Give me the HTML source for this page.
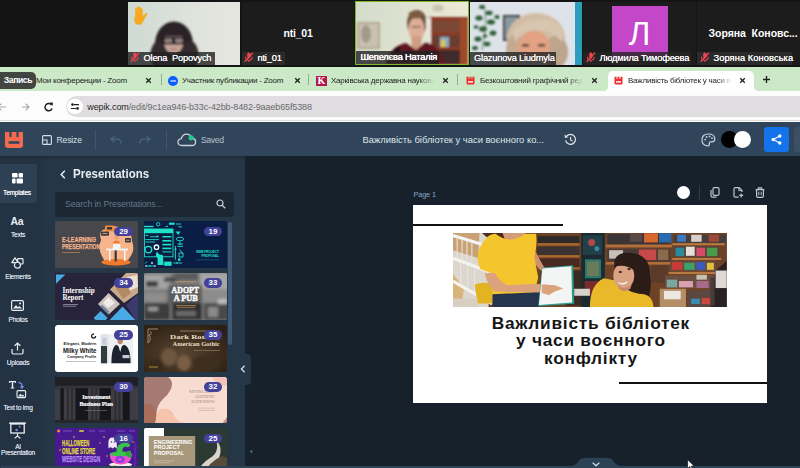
<!DOCTYPE html>
<html><head><meta charset="utf-8">
<style>
*{margin:0;padding:0;box-sizing:border-box}
html,body{width:800px;height:468px;overflow:hidden;background:#16212b;font-family:"Liberation Sans",sans-serif}
.a{position:absolute}
#zoom{left:0;top:0;width:800px;height:67px;background:#141414}
.tile{position:absolute;top:1.5px;height:63.5px;background:#1a1a1a;overflow:hidden}
.nm{position:absolute;bottom:0;left:0;height:13.5px;background:rgba(34,34,34,.8);color:#fff;font-size:9.3px;line-height:13.5px;padding:0 3px 0 2px;white-space:nowrap;letter-spacing:-.2px;text-shadow:0 0 .6px #fff}
.mic{display:inline-block;width:9.5px;height:10.5px;vertical-align:-2px;margin-right:4px}
#tabs{left:0;top:66px;width:800px;height:25px;background:#cbe9c6;border-top:1px solid #141414}
.tab{position:absolute;top:0;height:25px;font-size:8px;letter-spacing:-.22px;line-height:27px;height:24px;color:#222;white-space:nowrap;overflow:hidden}
.x{position:absolute;top:0;font-size:9px;line-height:25px;color:#222;font-weight:bold}
#addr{left:0;top:91px;width:800px;height:31px;background:#fdfcfd}
#pill{left:66px;top:96px;width:760px;height:21px;border-radius:11px;background:#dfdde0}
#wtop{left:0;top:121.5px;width:800px;height:34.5px;background:#30455a}
#rail{left:0;top:156px;width:44.4px;height:312px;background:#233343}
#panel{left:44px;top:156px;width:199.5px;height:312px;background:#253647}
#canvas{left:243.5px;top:156px;width:556.5px;height:312px;background:#16212b}
.rl{position:absolute;left:-2px;width:40px;text-align:center;color:#d3dbe3;font-size:6.6px;line-height:7px;letter-spacing:-.25px;white-space:nowrap;text-shadow:0 0 .4px #d3dbe3}
.th{position:absolute;width:83.2px;height:46.9px;overflow:hidden;border-radius:1.5px}
.bd{position:absolute;left:59.8px;top:5.5px;width:18.4px;height:9.5px;border-radius:4.8px;background:#43419a;color:#fff;font-size:7.9px;font-weight:bold;line-height:9.9px;text-align:center;letter-spacing:-.1px}
</style></head><body>
<div id="zoom" class="a">
<!-- tile 1 -->
<div class="tile" style="left:128px;width:112px;background:linear-gradient(90deg,#cfdad2,#dfe3dc 60%,#e6e6e0)">
<svg class="a" style="left:0;top:0" width="112" height="63" viewBox="0 0 112 63">
<defs><filter id="b1"><feGaussianBlur stdDeviation="1.1"/></filter></defs>
<g filter="url(#b1)">
<ellipse cx="46" cy="42" rx="19" ry="22.5" fill="#2a2125"/>
<ellipse cx="31" cy="53" rx="8.5" ry="14" fill="#352a2e"/>
<ellipse cx="62" cy="53" rx="8.5" ry="14" fill="#352a2e"/>
<ellipse cx="45.7" cy="40" rx="9.8" ry="11.5" fill="#c6a69a"/>
<path d="M36 31 Q46 24 56 31 L56 34 H36 Z" fill="#2a2125"/>
<rect x="34.4" y="34.6" width="22.4" height="8" rx="2.4" fill="#231d20"/>
<rect x="36.6" y="36.4" width="7.6" height="4.6" rx="1.4" fill="#8d7f7c"/>
<rect x="47.2" y="36.4" width="7.6" height="4.6" rx="1.4" fill="#8d7f7c"/>
<rect x="42" y="46.4" width="7" height="1.6" rx=".8" fill="#a8726c"/>
<rect x="30" y="56" width="36" height="8" fill="#4a4446"/>
</g>
<g transform="translate(3.6,3.8) scale(1.12)"><path d="M3.2 8.5 L3.2 3 Q3.2 2 4 2 Q4.8 2 4.8 3 L4.8 1.3 Q4.8 .3 5.7 .3 Q6.6 .3 6.6 1.3 L6.6 1.8 Q6.6 .9 7.4 .9 Q8.3 .9 8.3 1.9 L8.3 3 Q8.3 2.2 9.1 2.2 Q9.9 2.2 9.9 3.2 L9.9 9 L12.6 6.6 Q13.6 6 14 7 L10.5 13.5 Q9 17 6.3 17 Q2.4 17 2.4 12 Z" fill="#f6a821"/></g>
</svg>
<div class="nm" style="width:87px"><svg class="mic" viewBox="0 0 8 9"><use href="#mic"/></svg>Olena&nbsp; Popovych</div>
</div>
<!-- tile 2 -->
<div class="tile" style="left:242px;width:112px;background:#1c1c1c">
<div class="a" style="left:0;width:112px;top:24.6px;text-align:center;color:#fff;font-weight:bold;font-size:10.5px;line-height:14px;letter-spacing:-.2px">nti_01</div>
<div class="nm" style="background:#2b2b2b"><svg class="mic" viewBox="0 0 8 9"><use href="#mic"/></svg>nti_01</div>
</div>
<!-- tile 3 -->
<div class="tile" style="left:355px;top:1px;height:64px;width:114px;background:#7eb82a">
<svg class="a" style="left:1px;top:1px" width="112" height="62" viewBox="0 0 112 62">
<defs><filter id="b3"><feGaussianBlur stdDeviation="0.9"/></filter><linearGradient id="w3" x1="0" x2="1"><stop offset="0" stop-color="#d3dccb"/><stop offset="1" stop-color="#ece8d6"/></linearGradient></defs>
<rect width="112" height="62" fill="url(#w3)"/>
<g filter="url(#b3)">
<rect x="1" y="20" width="23" height="27" fill="#b9a98f"/>
<rect x="3" y="22" width="19" height="23" fill="#c9c2b0"/>
<ellipse cx="10" cy="32" rx="5" ry="9" fill="#a59a88"/>
<rect x="72" y="15" width="40" height="48" fill="#8c3a27"/>
<rect x="76" y="19" width="28" height="11" fill="#7a4a34"/>
<rect x="76" y="33" width="28" height="12" fill="#6a3e2e"/>
<rect x="76" y="48" width="28" height="14" fill="#3f2a2a"/>
<rect x="104" y="17" width="8" height="46" fill="#a04a2c"/>
<rect x="84" y="35" width="9" height="10" fill="#8aa8c0"/>
<rect x="85" y="38" width="4" height="7" fill="#e0c838"/>
<ellipse cx="82" cy="6" rx="6" ry="3.5" fill="#c9c4b4"/>
<ellipse cx="61" cy="21" rx="10" ry="13" fill="#6e523c"/>
<rect x="70" y="16" width="5" height="26" fill="#e8e4dc"/>
<ellipse cx="60.5" cy="27" rx="8" ry="12" fill="#dcae96"/>
<ellipse cx="60" cy="12.5" rx="7.5" ry="4" fill="#7a5a40"/><rect x="56" y="24" width="9" height="1.6" fill="#8a6654"/><rect x="58" y="35" width="5" height="1.4" fill="#b8705e"/>
<rect x="55.5" y="34" width="10" height="16" fill="#cf9c84"/><path d="M30 62 Q34 44 50 41 L60 48 L70 40 Q86 45 88 62 Z" fill="#5e1820"/>
<path d="M38 50 l6 -4 M46 56 l8 -6 M70 50 l8 6 M60 58 l10 -4" stroke="#1c1014" stroke-width="4"/>
</g>
</svg>
<div class="nm" style="left:1px;bottom:1px;width:83px;padding-left:4.5px;text-shadow:0 0 .8px #fff,0 0 .4px #fff">Шепелєва Наталія</div>
</div>
<!-- tile 4 -->
<div class="tile" style="left:470px;width:112px;background:#dde3e8">
<svg class="a" style="left:0;top:0" width="112" height="63" viewBox="0 0 112 63">
<defs><filter id="b4"><feGaussianBlur stdDeviation="1"/></filter></defs>
<rect x="105" y="0" width="7" height="63" fill="#2d9dbd"/>
<g filter="url(#b4)">
<rect x="33" y="13" width="17" height="26" fill="#3c434c"/>
<rect x="35" y="15" width="13" height="22" fill="#8a96a0"/>
<g fill="#2f5e38"><ellipse cx="12" cy="5" rx="3" ry="2"/><ellipse cx="19" cy="11" rx="3.6" ry="2.2"/><ellipse cx="9" cy="16" rx="3.6" ry="2.6"/><ellipse cx="21" cy="20" rx="4" ry="2.6"/><ellipse cx="13" cy="27" rx="4" ry="2.8"/><ellipse cx="23" cy="31" rx="3.4" ry="2.6"/><ellipse cx="8" cy="37" rx="3.6" ry="2.6"/><ellipse cx="17" cy="42" rx="3.4" ry="2.2"/><ellipse cx="27" cy="15" rx="2.6" ry="2"/><ellipse cx="5" cy="46" rx="3" ry="2"/><ellipse cx="15" cy="34" rx="2.4" ry="1.8"/><ellipse cx="6" cy="25" rx="2.4" ry="1.8"/><path d="M14 3 Q18 20 12 48" fill="none" stroke="#4a6a44" stroke-width=".8"/></g>
<ellipse cx="66" cy="36" rx="29" ry="25" fill="#d2bca4"/>
<ellipse cx="86" cy="50" rx="12" ry="16" fill="#bda48c"/>
<ellipse cx="45" cy="48" rx="9" ry="16" fill="#c4aa92"/>
<ellipse cx="64" cy="44" rx="16" ry="15" fill="#e2a283"/>
<path d="M42 30 Q55 14 80 18 Q96 24 92 40 Q80 26 62 28 Q50 30 46 40 Z" fill="#d8c6b0"/>
<rect x="52" y="42" width="7" height="2.5" fill="#4a3a34"/><rect x="68" y="42" width="7" height="2.5" fill="#4a3a34"/>
</g>
</svg>
<div class="nm" style="width:86px;padding-left:4px">Glazunova Liudmyla</div>
</div>
<!-- tile 5 -->
<div class="tile" style="left:583px;width:113px;background:#1c1c1c">
<div class="a" style="left:28.5px;top:4px;width:56px;height:52px;background:#c446c9;color:#fff;font-size:33px;line-height:56px;text-align:center">Л</div>
<div class="nm" style="width:108px;background:rgba(38,38,38,.82)"><svg class="mic" viewBox="0 0 8 9" style="margin-left:1px"><use href="#mic"/></svg>Людмила Тимофеева</div>
</div>
<!-- tile 6 -->
<div class="tile" style="left:697px;width:103px;background:#1c1c1c">
<div class="a" style="left:11.5px;top:24.8px;color:#fff;font-weight:bold;font-size:10.5px;line-height:14px;white-space:nowrap;letter-spacing:-.04px">Зоряна&nbsp; Коновс...</div>
<div class="nm" style="background:#2b2b2b;width:95px;letter-spacing:.08px"><svg class="mic" viewBox="0 0 8 9" style="margin-left:1px"><use href="#mic"/></svg>Зоряна Коновська</div>
</div>
</div>
<svg width="0" height="0" style="position:absolute"><defs><g id="mic"><rect x="2.7" y=".5" width="2.8" height="5" rx="1.4" fill="#ee4450"/><path d="M1.2 4 Q1.2 7 4.1 7 Q7 7 7 4 M4.1 7 V8.6" stroke="#ee4450" stroke-width=".9" fill="none"/><path d="M.6 8.4 L7.6 .6" stroke="#ee4450" stroke-width="1.1"/></g></defs></svg>

<div id="tabs" class="a">
<div class="a" style="left:608px;top:3.5px;width:146px;height:21px;background:#fff;border-radius:5px 5px 0 0"></div>
<div class="a" style="left:603px;top:19px;width:5px;height:5px;background:radial-gradient(circle at 0 0,transparent 5px,#fff 5.5px)"></div>
<div class="a" style="left:754px;top:19px;width:5px;height:5px;background:radial-gradient(circle at 100% 0,transparent 5px,#fff 5.5px)"></div>
<div class="tab" style="left:36px;width:96px">Мои конференции - Zoom</div>
<svg class="a" style="left:145px;top:9.5px" width="7" height="7" viewBox="0 0 7 7"><path d="M1.2 1.2 L5.8 5.8 M5.8 1.2 L1.2 5.8" stroke="#1f1f1f" stroke-width="1.25"/></svg>
<div class="a" style="left:161px;top:7px;width:1px;height:11px;background:#8fae8c"></div>
<div class="a" style="left:168px;top:8.5px;width:10px;height:10px;border-radius:5px;background:#0b5cff;color:#fff;font-size:4px;line-height:10px;text-align:center;font-weight:bold">zm</div>
<div class="tab" style="left:182px;width:108px">Участник публикации - Zoom</div>
<svg class="a" style="left:294px;top:9.5px" width="7" height="7" viewBox="0 0 7 7"><path d="M1.2 1.2 L5.8 5.8 M5.8 1.2 L1.2 5.8" stroke="#1f1f1f" stroke-width="1.25"/></svg>
<div class="a" style="left:308px;top:7px;width:1px;height:11px;background:#8fae8c"></div>
<div class="a" style="left:316px;top:8.5px;width:11px;height:10.5px;background:#b2184f;color:#fff;font-family:'Liberation Serif',serif;font-weight:bold;font-size:10px;line-height:10.5px;text-align:center">K</div>
<div class="tab" style="left:331px;width:103px;-webkit-mask-image:linear-gradient(90deg,#000 85%,transparent)">Харківська державна наукова</div>
<svg class="a" style="left:442px;top:9.5px" width="7" height="7" viewBox="0 0 7 7"><path d="M1.2 1.2 L5.8 5.8 M5.8 1.2 L1.2 5.8" stroke="#1f1f1f" stroke-width="1.25"/></svg>
<div class="a" style="left:457px;top:7px;width:1px;height:11px;background:#8fae8c"></div>
<svg class="a" style="left:466px;top:9px" width="9" height="9" viewBox="0 0 9 9"><use href="#wfav"/></svg>
<div class="tab" style="left:480px;width:103px;-webkit-mask-image:linear-gradient(90deg,#000 85%,transparent)">Безкоштовний графічний реда</div>
<svg class="a" style="left:591px;top:9.5px" width="7" height="7" viewBox="0 0 7 7"><path d="M1.2 1.2 L5.8 5.8 M5.8 1.2 L1.2 5.8" stroke="#1f1f1f" stroke-width="1.25"/></svg>
<svg class="a" style="left:614px;top:9px" width="9" height="9" viewBox="0 0 9 9"><use href="#wfav"/></svg>
<div class="tab" style="left:628px;width:104px;-webkit-mask-image:linear-gradient(90deg,#000 85%,transparent)">Важливість бібліотек у часи во</div>
<svg class="a" style="left:739px;top:9.5px" width="7" height="7" viewBox="0 0 7 7"><path d="M1.2 1.2 L5.8 5.8 M5.8 1.2 L1.2 5.8" stroke="#1f1f1f" stroke-width="1.25"/></svg>
<svg class="a" style="left:761.5px;top:8px" width="9" height="9" viewBox="0 0 9 9"><path d="M4.5 1 V8 M1 4.5 H8" stroke="#1f1f1f" stroke-width="1.35"/></svg>
<div class="a" style="left:21px;top:8px;width:10px;height:10px;border-radius:5px;background:#0b5cff"></div>
<div class="a" style="left:0;top:5.4px;width:36px;height:16.6px;background:rgba(58,58,56,.94);border-radius:0 5px 5px 0;color:#fff;font-weight:bold;font-size:8.7px;letter-spacing:-.45px;line-height:16.6px;padding-left:3.8px">Запись</div>
</div>
<svg width="0" height="0" style="position:absolute"><defs><g id="wfav"><path d="M.5 .8 H2.6 V3 H3.5 V.8 H5.5 V3 H6.4 V.8 H8.5 V7.2 Q8.5 8.5 7.2 8.5 H1.8 Q.5 8.5 .5 7.2 Z" fill="#e8312f"/><rect x="2" y="5.2" width="5" height="1.4" fill="#fff"/></g></defs></svg>

<div id="addr" class="a">
<div class="a" style="left:0;top:29px;width:800px;height:1px;background:#dcdcdc"></div>
<svg class="a" style="left:0;top:10px" width="60" height="12" viewBox="0 0 60 12">
<path d="M-2 6 H6 M1.4 2.6 L-2 6 L1.4 9.4" stroke="#a6a6a6" stroke-width="1.1" fill="none"/>
<path d="M22 6 H29 M25.6 2.6 L29 6 L25.6 9.4" stroke="#a6a6a6" stroke-width="1.1" fill="none"/>
<path d="M51.6 4.2 A3.6 3.6 0 1 0 52 7.4" stroke="#1f1f1f" stroke-width="1.5" fill="none"/><path d="M49.6 1.6 H52.8 V4.8 Z" fill="#1f1f1f"/>
</svg>
</div>
<div id="pill" class="a">
<div class="a" style="left:1.2px;top:3px;width:15.4px;height:15.4px;border-radius:8px;background:#fff"></div>
<svg class="a" style="left:5px;top:7.4px" width="8" height="7" viewBox="0 0 8 7"><path d="M3 1.6 H8 M0 5.4 H5" stroke="#1f1f1f" stroke-width="1.05"/><circle cx="1.5" cy="1.6" r="1.3" fill="#1f1f1f"/><circle cx="6.5" cy="5.4" r="1.3" fill="#1f1f1f"/></svg>
<div class="a" style="left:21.3px;top:0;font-size:9px;line-height:22px;color:#1f1f1f;white-space:nowrap;letter-spacing:-.12px">wepik.com<span style="color:#6a6a6a">/edit/9c1ea946-b33c-42bb-8482-9aaeb65f5388</span></div>
</div>
<div id="wtop" class="a">
<svg class="a" style="left:4.5px;top:10px" width="18" height="16" viewBox="0 0 18 16"><path d="M0 0 H4.4 V5 H6.6 V0 H11.4 V5 H13.6 V0 H18 V13 Q18 16 15 16 H3 Q0 16 0 13 Z" fill="#f36a4f"/><rect x="3.6" y="9.2" width="10.8" height="2.6" fill="#30455a"/></svg>
<svg class="a" style="left:42px;top:13.5px" width="10" height="10" viewBox="0 0 10 10"><rect x=".6" y=".6" width="8.8" height="8.8" rx="1" fill="none" stroke="#d5dde5" stroke-width="1.1"/><path d="M.6 5 H5 V9.4" fill="none" stroke="#d5dde5" stroke-width="1.1"/></svg>
<div class="a" style="left:56.5px;top:0;font-size:8.6px;line-height:36px;color:#d9e1e8;letter-spacing:-.17px">Resize</div>
<div class="a" style="left:95px;top:8px;width:1px;height:20px;background:#40556a"></div>
<svg class="a" style="left:110px;top:13px" width="12" height="10" viewBox="0 0 12 10"><path d="M4.5 1 L1 4.2 L4.5 7.4 M1 4.2 H7.5 Q11 4.2 11 8.5" fill="none" stroke="#4d647a" stroke-width="1.2"/></svg>
<svg class="a" style="left:139px;top:13px" width="12" height="10" viewBox="0 0 12 10"><path d="M7.5 1 L11 4.2 L7.5 7.4 M11 4.2 H4.5 Q1 4.2 1 8.5" fill="none" stroke="#4d647a" stroke-width="1.2"/></svg>
<div class="a" style="left:166px;top:8px;width:1px;height:20px;background:#40556a"></div>
<svg class="a" style="left:177px;top:11px" width="20" height="14" viewBox="0 0 20 14"><path d="M5 12.5 Q1 12.5 1 9 Q1 6 4.4 5.6 Q5.4 1.2 9.6 1.2 Q13.4 1.2 14.4 5 Q18.6 5.2 18.6 9 Q18.6 12.5 14.8 12.5 Z" fill="none" stroke="#c9d3dc" stroke-width="1.3"/><circle cx="14.2" cy="4.8" r="2.6" fill="#1fc98e"/></svg>
<div class="a" style="left:201px;top:0;font-size:8.6px;line-height:36px;color:#b6c2cd;letter-spacing:-.36px">Saved</div>
<div class="a" style="left:362.5px;top:0;font-size:9.4px;line-height:36.5px;color:#dfe6ec;white-space:nowrap;letter-spacing:0">Важливість бібліотек у часи воєнного ко...</div>
<svg class="a" style="left:563.5px;top:11px" width="13" height="13" viewBox="0 0 13 13"><path d="M2.6 3.2 A5 5 0 1 1 1.6 7.4" fill="none" stroke="#dfe6ec" stroke-width="1.2"/><path d="M.6 1.6 L.9 5 L4.2 4.2 Z" fill="#dfe6ec"/><path d="M6.6 4 V6.9 L8.6 8" fill="none" stroke="#dfe6ec" stroke-width="1.1"/></svg>
<svg class="a" style="left:700.5px;top:11.5px" width="15" height="14" viewBox="0 0 15 14"><path d="M7.4 1 Q13.8 1 13.8 6 Q13.8 8.8 10.8 8.8 H9.6 Q8.2 8.8 8.4 10.2 Q8.8 12.8 6.6 12.8 Q1 12.4 1 7 Q1 1 7.4 1 Z" fill="none" stroke="#c9d3dc" stroke-width="1.2"/><circle cx="4.2" cy="6.6" r=".9" fill="#c9d3dc"/><circle cx="5.6" cy="4" r=".9" fill="#c9d3dc"/><circle cx="8.6" cy="3.4" r=".9" fill="#c9d3dc"/><circle cx="11" cy="5.2" r=".9" fill="#c9d3dc"/></svg>
<div class="a" style="left:721px;top:9.5px;width:17px;height:17px;border-radius:9px;background:#000"></div>
<div class="a" style="left:733.7px;top:9.2px;width:17.6px;height:17.6px;border-radius:9px;background:#fff"></div>
<div class="a" style="left:763.5px;top:5px;width:25px;height:25px;border-radius:3px;background:#1273ea"></div>
<svg class="a" style="left:770.5px;top:12px" width="11" height="11" viewBox="0 0 11 11"><path d="M8.6 2 L2.4 5.5 L8.6 9" fill="none" stroke="#fff" stroke-width="1.1"/><circle cx="8.8" cy="2" r="1.7" fill="#fff"/><circle cx="2.2" cy="5.5" r="1.7" fill="#fff"/><circle cx="8.8" cy="9" r="1.7" fill="#fff"/></svg>
<div class="a" style="left:794px;top:5px;width:10px;height:25px;border-radius:3px;background:#3b5065"></div>
</div>
<div class="a" style="left:0;top:156px;width:800px;height:4px;background:linear-gradient(#17202a88,#17202a00);z-index:5"></div>
<div id="rail" class="a">
<div class="a" style="left:0;top:8px;width:37px;height:39px;background:#2d4054;border-radius:0 3px 3px 0"></div>
<svg class="a" style="left:12px;top:17px" width="11" height="11" viewBox="0 0 11 11"><rect x="0" y="0" width="5.6" height="4.6" rx="1" fill="#fff"/><rect x="6.6" y="0" width="4.4" height="4.6" rx="1" fill="#fff"/><rect x="0" y="5.6" width="3.6" height="4.8" rx="1" fill="#fff"/><rect x="4.6" y="5.6" width="6.4" height="4.8" rx="1" fill="#fff"/></svg>
<div class="rl" style="top:32.8px;left:-3px;color:#fff">Templates</div>
<div class="a" style="left:10.5px;top:59px;width:14px;font-size:10.5px;font-weight:bold;color:#e8edf2;line-height:12px;letter-spacing:-.3px">Aa</div>
<div class="rl" style="top:74.8px">Texts</div>
<svg class="a" style="left:11px;top:100.5px" width="13" height="12" viewBox="0 0 13 12"><path d="M4 .8 L7.2 5.6 H.8 Z" fill="none" stroke="#e8edf2" stroke-width="1.2" stroke-linejoin="round"/><rect x="6.6" y="1.6" width="5.4" height="5.4" rx=".8" fill="none" stroke="#e8edf2" stroke-width="1.2"/><circle cx="6.4" cy="8.2" r="3" fill="#233343" stroke="#e8edf2" stroke-width="1.2"/></svg>
<div class="rl" style="top:117px">Elements</div>
<svg class="a" style="left:11px;top:144px" width="13" height="11" viewBox="0 0 13 11"><rect x=".6" y=".6" width="11.8" height="9.8" rx="1.2" fill="none" stroke="#e8edf2" stroke-width="1.2"/><path d="M2 8.6 L5 5 L7 7.2 L8.4 6 L11 8.6 Z" fill="#e8edf2"/><circle cx="9" cy="3.4" r="1" fill="#e8edf2"/></svg>
<div class="rl" style="top:159.8px">Photos</div>
<svg class="a" style="left:11px;top:185.5px" width="13" height="13" viewBox="0 0 13 13"><path d="M1 7 V10.6 Q1 12 2.4 12 H10.6 Q12 12 12 10.6 V7" fill="none" stroke="#e8edf2" stroke-width="1.2"/><path d="M6.5 8.6 V1.2 M3.6 3.8 L6.5 1 L9.4 3.8" fill="none" stroke="#e8edf2" stroke-width="1.2"/></svg>
<div class="rl" style="top:202.8px">Uploads</div>
<svg class="a" style="left:8px;top:224px" width="19" height="19" viewBox="0 0 19 19"><path d="M1 1 H8 V3 H7.2 V2.2 H5.2 V7.4 H6.2 V8.4 H2.8 V7.4 H3.8 V2.2 H1.8 V3 H1 Z" fill="#e8edf2"/><path d="M10.4 2.6 Q14 2.6 14 6 V7.6 M12.4 6.4 L14 8 L15.6 6.4" fill="none" stroke="#6d8cf0" stroke-width="1.3"/><rect x="9" y="10.6" width="8.6" height="7" rx="1" fill="none" stroke="#e8edf2" stroke-width="1.1"/><path d="M10 16.6 L12.4 13.8 L14 15.4 L15 14.6 L16.8 16.6 Z" fill="#e8edf2"/></svg>
<div class="rl" style="top:247.6px">Text to img</div>
<svg class="a" style="left:8.5px;top:266px" width="17" height="17" viewBox="0 0 17 17"><rect x=".2" y=".4" width="16.6" height="1.6" fill="#e8edf2"/><rect x="1.8" y="2" width="13.4" height="9" fill="#1a2633" stroke="#e8edf2" stroke-width="1.3"/><circle cx="10.6" cy="4.8" r="1" fill="#6d8cf0"/><circle cx="7.6" cy="8" r="1.3" fill="#6d8cf0"/><path d="M8.5 11.6 V14.4 M5.6 16.4 L8.5 14 L11.4 16.4" fill="none" stroke="#e8edf2" stroke-width="1.2"/></svg>
<div class="rl" style="top:286.6px">AI</div>
<div class="rl" style="top:292.5px">Presentation</div>
</div>
<div id="panel" class="a">
<svg class="a" style="left:16px;top:13.5px" width="6" height="9" viewBox="0 0 6 9"><path d="M4.8 .8 L1.2 4.5 L4.8 8.2" fill="none" stroke="#e8eef4" stroke-width="1.5"/></svg>
<div class="a" style="left:28.5px;top:9.3px;font-size:13px;font-weight:bold;line-height:18px;color:#e8eef4;transform:scaleX(.885);transform-origin:0 0;white-space:nowrap">Presentations</div>
<div class="a" style="left:11px;top:35.5px;width:179px;height:25px;border-radius:3px;background:#1b2733"></div>
<div class="a" style="left:21px;top:35.5px;font-size:8.8px;line-height:25px;color:#66778a;letter-spacing:-.12px">Search in Presentations...</div>
<svg class="a" style="left:172px;top:43px" width="10" height="10" viewBox="0 0 10 10"><circle cx="4" cy="4" r="3" fill="none" stroke="#c9d3dc" stroke-width="1.2"/><path d="M6.2 6.2 L9.2 9.2" stroke="#c9d3dc" stroke-width="1.3"/></svg>
<div class="a" style="left:183.5px;top:66px;width:4.5px;height:123px;border-radius:2px;background:#3f5a74"></div>
<div class="th" style="left:10.6px;top:65.0px;"><svg class="a" style="left:0;top:0" width="83" height="47" viewBox="0 0 83 47"><rect width="83" height="47" fill="#48474b"/>
<path d="M46 19 Q43 9 51 8 Q57 3.5 65 6.5 Q77 8.5 77 20 Q80.5 30 75 36 Q73 42 61 42 Q50 44 47.5 36 Q42.5 28 46 19 Z" fill="#f6b48d"/>
<ellipse cx="61" cy="41.2" rx="14.6" ry="3.2" fill="#ee7a2c"/>
<rect x="50" y="4.5" width="9.5" height="6" rx="1.2" fill="#f08a3c"/><rect x="52" y="6" width="5" height="2.6" fill="#3a3a3e"/><rect x="46" y="10.4" width="8" height="4.4" rx="1" fill="#3a3a3e"/><rect x="47.4" y="12" width="5" height=".8" fill="#f6b48d"/><rect x="70" y="17" width="6" height="4.6" rx="1" fill="#3a3a3e"/><rect x="71.2" y="18.8" width="3.4" height=".8" fill="#f6b48d"/>
<circle cx="61.5" cy="16" r="2.8" fill="#f2a27a"/><path d="M57 26 Q57 19.5 61.5 19.5 Q66 19.5 66 26 Z" fill="#ee7a2c"/><rect x="57.6" y="22.6" width="8" height="5.4" fill="#f4f4f4"/><rect x="51" y="27.6" width="22" height="1.8" fill="#f4f4f4"/><rect x="54" y="29" width="1.5" height="11" fill="#f4f4f4"/><rect x="69" y="29" width="1.5" height="11" fill="#f4f4f4"/><rect x="59.6" y="29.4" width="2.2" height="11" fill="#3a3a3e"/>
<text x="7" y="20.6" font-family="Liberation Sans, sans-serif" font-weight="bold" font-size="7.6" fill="#f6b48d" stroke="#f6b48d" stroke-width=".25" textLength="34" lengthAdjust="spacingAndGlyphs">E-LEARNING</text>
<text x="7" y="27.6" font-family="Liberation Sans, sans-serif" font-weight="bold" font-size="7.6" fill="#f6b48d" stroke="#f6b48d" stroke-width=".25" textLength="38" lengthAdjust="spacingAndGlyphs">PRESENTATION</text>
<rect x="7" y="31" width="18" height=".9" fill="#a87858"/></svg><div class="bd">29</div></div>
<div class="th" style="left:99.9px;top:65.0px;"><svg class="a" style="left:0;top:0" width="83" height="47" viewBox="0 0 83 47"><rect width="83" height="47" fill="#0a1e45"/>
<g fill="none" stroke="#1fe3c6" stroke-width=".9">
<rect x="0" y="4.8" width="9.5" height="1.4" fill="#1fe3c6" stroke="none"/><circle cx="14.2" cy="3.2" r="1.7"/><rect x="25" y="1.6" width="5.6" height="2.2" fill="#1fe3c6" stroke="none"/><path d="M21.4 5.4 H24 M32 3 H37 M34.4 5.8 H38"/>
<rect x=".4" y="8" width="28.6" height="27.8"/><rect x="0" y="8" width="29" height="4.2" fill="#1fe3c6" stroke="none"/>
<path d="M1.6 14.4 H4.4 M6 15.8 H13 M1.4 18.6 H15 M1.4 21 H11"/><rect x="12.6" y="14.6" width="1.8" height="1.8" fill="#1fe3c6" stroke="none"/>
<g stroke="none" fill="#1fe3c6"><rect x="18.4" y="15" width="8.9" height="1.4"/><rect x="18.4" y="19" width="8.9" height="1.6"/><rect x="18.4" y="22.8" width="8.9" height="1.6"/><rect x="18.4" y="26.6" width="8.9" height="1.6"/><rect x="18.4" y="30.4" width="8.9" height="1"/></g>
<circle cx="4.4" cy="28.6" r="3.3" stroke-width="1.3"/><circle cx="12.5" cy="26.2" r="2.2" stroke="#eafffb" stroke-width="1.3"/>
<path d="M12.6 30.4 L15.4 33.4 L18.8 34 L19.6 44 H13.6 L13.6 37 L11.8 35.2 Z" fill="#1fe3c6" stroke="none"/>
<rect x="20.2" y="40.6" width="7.4" height="4.2" fill="#1fe3c6" stroke="none"/>
<path d="M31.6 10.4 H36.6 L34.1 14 Z" fill="#1fe3c6" stroke="none"/><ellipse cx="36" cy="18" rx="3.6" ry="1.8"/><path d="M36 20.4 V24 M33.6 23 H39 M33.6 25.4 H39"/>
<path d="M31.4 25 V38.6 M30.4 28 H32.6 M35.6 28.6 L38.6 32.6 M35 32 H39 V36 H35 Z"/><rect x="34" y="37.4" width="2.4" height="2.4" fill="#1fe3c6" stroke="none"/><path d="M29.4 42 H38 M33 41 V43"/>
<path d="M1 42.6 L3 40.6 M1.4 45 H11 M6 44 V46"/><rect x="7.2" y="41.2" width="1.6" height="1.6" fill="#eafffb" stroke="none"/><circle cx="2" cy="45" r=".8" fill="#eafffb" stroke="none"/><circle cx="11" cy="45" r=".8" fill="#eafffb" stroke="none"/>
</g>
<text x="74.8" y="32.3" text-anchor="end" font-family="Liberation Sans, sans-serif" font-weight="bold" font-size="3.3" fill="#1fe3c6" textLength="22.5" lengthAdjust="spacingAndGlyphs">WEB PROJECT</text>
<text x="74.8" y="35.9" text-anchor="end" font-family="Liberation Sans, sans-serif" font-weight="bold" font-size="3.3" fill="#1fe3c6" textLength="17.2" lengthAdjust="spacingAndGlyphs">PROPOSAL</text>
<rect x="52.3" y="38.6" width="22.5" height=".6" fill="#126a7e"/></svg><div class="bd">19</div></div>
<div class="th" style="left:10.6px;top:116.9px;"><svg class="a" style="left:0;top:0" width="83" height="47" viewBox="0 0 83 47"><rect width="83" height="47" fill="#27233b"/>
<path d="M1 1.4 H10.4 L1 10.8 Z" fill="#48a9e4"/>
<path d="M71 0 H83 V20 L69 30 L55 16.4 Z" fill="#c9a98c"/><path d="M72 4 L82 2 L83 14 L74 18 Z" fill="#ece0d4"/><path d="M60 14 L70 8 L76 20 L68 26 Z" fill="#b38a66"/>
<path d="M53.6 20 L65 31 L53.6 41.4 L43 31 Z" fill="#cfc4bc"/><path d="M53.6 24 L60 30 L53 35 L48 30 Z" fill="#f0ece8"/><path d="M47 32 L54 38 L53.6 41.4 L45 33 Z" fill="#6a86b0"/>
<path d="M71 32 L83 21 V47 H80.6 Z" fill="#3b3a6e"/>
<path d="M54.6 47 L67.6 33.6 L80.4 47 Z" fill="#48a9e4"/>
<path d="M38.6 45 L45.6 38 L52.6 45 L50.6 47 H40.6 Z" fill="#48a9e4"/>
<text x="7.4" y="19.6" font-family="Liberation Serif, serif" font-weight="bold" font-size="8.6" fill="#fff" textLength="32.4" lengthAdjust="spacingAndGlyphs">Internship</text>
<text x="7.4" y="26.8" font-family="Liberation Serif, serif" font-weight="bold" font-size="8.6" fill="#fff" textLength="21" lengthAdjust="spacingAndGlyphs">Report</text>
<rect x="8" y="31" width="15" height=".7" fill="#a8a8bc"/><rect x="8" y="32.8" width="13" height=".7" fill="#a8a8bc"/></svg><div class="bd">34</div></div>
<div class="th" style="left:99.9px;top:116.9px;"><svg class="a" style="left:0;top:0" width="83" height="47" viewBox="0 0 83 47"><defs><linearGradient id="g4" x1="0" y1="0" x2="1" y2="1"><stop offset="0" stop-color="#585858"/><stop offset=".5" stop-color="#8e8e8e"/><stop offset="1" stop-color="#5a5a5a"/></linearGradient><filter id="bl4"><feGaussianBlur stdDeviation="1.6"/></filter></defs><rect width="83" height="47" fill="url(#g4)"/>
<g filter="url(#bl4)"><rect x="-4" y="-4" width="91" height="55" fill="#7c7c7c"/><rect x="0" y="2" width="26" height="14" fill="#a4a4a4"/><rect x="2" y="8" width="12" height="6" fill="#3e3e3e"/><rect x="20" y="4" width="14" height="5" fill="#4a4a4a"/><rect x="0" y="20" width="22" height="9" fill="#8e8e8e"/><rect x="0" y="30" width="26" height="17" fill="#3c3c3c"/><rect x="4" y="34" width="10" height="4" fill="#9a9a9a"/>
<rect x="30" y="0" width="24" height="7" fill="#5a5a5a"/><rect x="28" y="30" width="30" height="17" fill="#2e2e2e"/><rect x="32" y="38" width="20" height="5" fill="#6a6a6a"/>
<rect x="56" y="0" width="30" height="16" fill="#a6a6a6"/><rect x="58" y="16" width="28" height="14" fill="#8c8c8c"/><rect x="60" y="30" width="26" height="17" fill="#4a4a4a"/><rect x="64" y="34" width="10" height="10" fill="#8a8a8a"/><rect x="74" y="26" width="9" height="5" fill="#bcbcbc"/>
<rect x="24" y="12" width="34" height="18" fill="#5c5c5c"/></g>
<text x="27.6" y="19.8" font-family="Liberation Serif, serif" font-weight="bold" font-size="8.8" fill="#fff" stroke="#fff" stroke-width=".45" textLength="27.4" lengthAdjust="spacingAndGlyphs">ADOPT</text>
<text x="29.8" y="27.8" font-family="Liberation Serif, serif" font-weight="bold" font-size="8.8" fill="#fff" stroke="#fff" stroke-width=".45" textLength="24" lengthAdjust="spacingAndGlyphs">A PUB</text>
<rect x="31" y="8.4" width="21" height=".8" fill="#c89a58"/><rect x="32" y="32.4" width="20" height=".8" fill="#c89a58"/><rect x="33" y="34.4" width="18" height=".7" fill="#b88a50"/></svg><div class="bd">33</div></div>
<div class="th" style="left:10.6px;top:168.7px;border-radius:2.5px;"><svg class="a" style="left:0;top:0" width="83" height="47" viewBox="0 0 83 47"><rect width="83" height="47" rx="2" fill="#fff"/>
<rect x="45.6" y="9.3" width="32.4" height="29" fill="#eef0f3"/><rect x="45.6" y="9.3" width="8" height="29" fill="#dfe3e8"/><rect x="46" y="21" width="6" height="17.3" fill="#2e3c3e"/><rect x="47.4" y="13" width="4" height="7" fill="#c4ccd4"/>
<path d="M56.4 38.3 Q56.4 21.6 61.4 19.8 L65.2 22.4 L69 19.8 Q75.6 21.6 75.6 38.3 Z" fill="#1d2231"/><path d="M63.4 20.6 L65.2 27 L67 20.6 Z" fill="#f6f6f6"/><ellipse cx="65.2" cy="15.6" rx="2.8" ry="3.6" fill="#b78868"/><path d="M62.3 14.2 Q65.2 10 68.1 14.2 Q65.2 12.6 62.3 14.2 Z" fill="#1a1a1a"/><rect x="67.5" y="30" width="7" height="3.2" fill="#c6cad0"/>
<circle cx="38.6" cy="11.1" r="2" fill="none" stroke="#1b1b1b" stroke-width="1.2" stroke-dasharray="9 3.6"/>
<text x="41.4" y="19.8" text-anchor="end" font-family="Liberation Sans, sans-serif" font-weight="bold" font-size="4.4" fill="#222" textLength="32.8" lengthAdjust="spacingAndGlyphs">Elegant, Modern</text>
<text x="41.4" y="27.6" text-anchor="end" font-family="Liberation Sans, sans-serif" font-weight="bold" font-size="7.4" fill="#111" textLength="33.5" lengthAdjust="spacingAndGlyphs">Milky White</text>
<text x="41.4" y="32.6" text-anchor="end" font-family="Liberation Sans, sans-serif" font-weight="bold" font-size="4.4" fill="#222" textLength="29.4" lengthAdjust="spacingAndGlyphs">Company Profile</text>
<rect x="11" y="36" width="30" height=".6" fill="#999"/></svg><div class="bd">25</div></div>
<div class="th" style="left:99.9px;top:168.7px;"><svg class="a" style="left:0;top:0" width="83" height="47" viewBox="0 0 83 47"><defs><radialGradient id="g6" cx=".45" cy=".6" r=".7"><stop offset="0" stop-color="#5a4430"/><stop offset="1" stop-color="#2c2014"/></radialGradient><filter id="bl6"><feGaussianBlur stdDeviation="1.4"/></filter></defs><rect width="83" height="47" fill="url(#g6)"/>
<g filter="url(#bl6)"><ellipse cx="25" cy="32" rx="8" ry="9" fill="#6e5640"/><ellipse cx="40" cy="38" rx="7" ry="8" fill="#7a5e44"/><ellipse cx="12" cy="40" rx="8" ry="6" fill="#3a2c1e"/><ellipse cx="62" cy="38" rx="14" ry="7" fill="#3c2e1e"/></g>
<path d="M4 4 H14 M4 4 V18 Q8 14 5 10 Q9 9 6 6" fill="none" stroke="#b9a27a" stroke-width=".8"/>
<rect x="36" y="5.6" width="26" height=".8" fill="#a8946e"/>
<text x="26" y="14.2" font-family="Liberation Serif, serif" font-weight="bold" font-size="6" fill="#eadfc4" textLength="50" lengthAdjust="spacingAndGlyphs">Dark Roman,</text>
<text x="28.6" y="20.6" font-family="Liberation Serif, serif" font-weight="bold" font-size="6" fill="#eadfc4" textLength="47" lengthAdjust="spacingAndGlyphs">American Gothic</text>
<rect x="50" y="25" width="26" height=".7" fill="#8c7a58"/><rect x="5" y="41.6" width="9" height=".8" fill="#c8a24a"/></svg><div class="bd">35</div></div>
<div class="th" style="left:10.6px;top:220.6px;"><svg class="a" style="left:0;top:0" width="83" height="47" viewBox="0 0 83 47"><rect width="83" height="47" fill="#1f1f23"/>
<rect x="0" y="0" width="83" height="47" fill="#17171b"/><rect x="0" y="0" width="83" height="8.6" fill="#202024"/><rect x="0" y="8.6" width="83" height="2.6" fill="#34343a"/>
<g fill="#3d3d43"><rect x="0" y="11.2" width="5.4" height="32"/><rect x="8.8" y="11.2" width="11.6" height="32"/><rect x="33" y="11.2" width="11.6" height="32"/><rect x="56" y="11.2" width="11.8" height="32"/><rect x="74.7" y="11.2" width="8.3" height="32"/></g>
<g fill="#2c2c32"><rect x="12" y="11.2" width="2" height="32"/><rect x="16" y="11.2" width="2" height="32"/><rect x="36.4" y="11.2" width="2" height="32"/><rect x="40.4" y="11.2" width="2" height="32"/><rect x="59.4" y="11.2" width="2" height="32"/><rect x="63.4" y="11.2" width="2" height="32"/></g>
<rect x="0" y="43" width="83" height="4" fill="#26262a"/>
<text x="41.4" y="21.8" text-anchor="middle" font-family="Liberation Serif, serif" font-weight="bold" font-size="6.6" fill="#fff" stroke="#fff" stroke-width=".2" textLength="28.2" lengthAdjust="spacingAndGlyphs">Investment</text>
<text x="41.2" y="29" text-anchor="middle" font-family="Liberation Serif, serif" font-weight="bold" font-size="6.6" fill="#fff" stroke="#fff" stroke-width=".2" textLength="33.4" lengthAdjust="spacingAndGlyphs">Business Plan</text>
<rect x="30" y="33.4" width="22" height=".6" fill="#777"/></svg><div class="bd">30</div></div>
<div class="th" style="left:99.9px;top:220.6px;border-radius:2.5px;"><svg class="a" style="left:0;top:0" width="83" height="47" viewBox="0 0 83 47"><rect width="83" height="47" rx="2" fill="#f8dcd2"/>
<path d="M12 47 Q10 38 16 32 Q26 30 30 38 Q34 46 44 47 Z" fill="#f6c4ad"/>
<path d="M0 2 Q0 0 2 0 H24 Q30 4 27 12 Q24 18 19 22 Q13 28 12.6 36 Q12 42 10.6 47 H2 Q0 47 0 45 Z" fill="#a57a72"/>
<path d="M0 28 Q6 24 10 30 Q13 36 11 47 H2 Q0 47 0 45 Z" fill="#a86e5a"/>
<path d="M68 0 H81 Q83 0 83 2 V9 Q76 9 70 4 Z" fill="#f5c3bb"/><path d="M83 40 V45 Q83 47 81 47 H78 Z" fill="#b88c84"/>
<text x="71" y="15.6" text-anchor="end" font-family="Liberation Serif, serif" font-size="4.6" fill="#a8948e" textLength="26">MINIMALIST</text>
<text x="71" y="20.6" text-anchor="end" font-family="Liberation Serif, serif" font-size="4.6" fill="#a8948e" textLength="21">AESTHETIC</text>
<text x="71" y="25.6" text-anchor="end" font-family="Liberation Serif, serif" font-size="4.6" fill="#a8948e" textLength="24">SLIDESHOW</text>
<rect x="54" y="30.8" width="17" height=".6" fill="#c0a8a2"/><rect x="54" y="33.2" width="17" height=".6" fill="#c0a8a2"/></svg><div class="bd">32</div></div>
<div class="th" style="left:10.6px;top:272.4px;"><svg class="a" style="left:0;top:0" width="83" height="47" viewBox="0 0 83 47"><rect width="83" height="47" fill="#471a8f"/>
<circle cx="3.6" cy="3" r="1.4" fill="#f6a21e"/><rect x="8" y="2.6" width="9" height=".8" fill="#8a5ed0"/><rect x="24" y="2.2" width="5" height="1.6" rx=".8" fill="#e8e03a"/><rect x="34" y="2.6" width="6" height=".8" fill="#8a5ed0"/><rect x="44" y="2.6" width="6" height=".8" fill="#8a5ed0"/><rect x="62" y="2.6" width="8" height=".8" fill="#8a5ed0"/><rect x="74" y="2.6" width="6" height=".8" fill="#8a5ed0"/>
<g fill="#f6c21e"><circle cx="19" cy="9" r=".8"/><circle cx="49" cy="9" r=".8"/><circle cx="45" cy="15" r=".7"/><circle cx="5" cy="22" r=".8"/><circle cx="52" cy="28" r=".7"/><circle cx="78" cy="14" r=".7"/></g>
<text x="7.1" y="17.8" font-family="Liberation Sans, sans-serif" font-weight="bold" font-size="8.2" fill="#e0de3a" stroke="#e0de3a" stroke-width=".25" textLength="27.3" lengthAdjust="spacingAndGlyphs">HALLOWEEN</text>
<text x="7.1" y="26.1" font-family="Liberation Sans, sans-serif" font-weight="bold" font-size="8.2" fill="#e0de3a" stroke="#e0de3a" stroke-width=".25" textLength="33" lengthAdjust="spacingAndGlyphs">ONLINE STORE</text>
<text x="7.1" y="34.4" font-family="Liberation Sans, sans-serif" font-weight="bold" font-size="8.2" fill="#b98af5" stroke="#b98af5" stroke-width=".25" textLength="38" lengthAdjust="spacingAndGlyphs">WEBSITE DESIGN</text>
<path d="M53.4 14.6 Q53.4 9.4 57.6 9.4 Q61.8 9.4 61.8 14.6 V20.4 L59.7 19 L57.6 20.4 L55.5 19 L53.4 20.4 Z" fill="#f1e9f6"/><circle cx="56.4" cy="14" r=".8" fill="#5a2a8a"/><circle cx="59.4" cy="14" r=".8" fill="#5a2a8a"/>
<ellipse cx="65.6" cy="36.6" rx="11.6" ry="2.4" fill="#f4f0e8"/>
<path d="M54.8 26 H76.8 Q76.8 36.4 65.8 36.4 Q54.8 36.4 54.8 26 Z" fill="#ee52cf"/><ellipse cx="65.8" cy="26" rx="11" ry="2.4" fill="#3cc24c"/>
<path d="M62 27 Q60 18 66 15.6 Q73 13.4 75.4 17 Q74 20.4 70.6 18.6 Q66 19 68 27 Z" fill="#3cc24c"/><path d="M70 26 Q72 22 76 23 V30 Q73 30 70 26 Z" fill="#2fa640"/>
<ellipse cx="65" cy="31.4" rx="4.6" ry="3.4" fill="#8a3ce0"/><rect x="62.6" y="30.4" width="4.8" height="2.2" rx="1" fill="#ee52cf"/>
<rect x="58" y="37.6" width="4" height="1.8" fill="#f08a2a"/><rect x="70" y="38" width="5" height="1.6" fill="#3cc24c"/>
<path d="M80 14 V47 M80 22 L83 18 M80 30 L77.4 26 M80 36 L82.6 33" stroke="#6a3ab0" stroke-width=".7"/></svg><div class="bd">16</div></div>
<div class="th" style="left:99.9px;top:272.4px;"><svg class="a" style="left:0;top:0" width="83" height="47" viewBox="0 0 83 47"><rect width="83" height="47" fill="#2c3a33"/>
<rect x="0" y="0" width="20" height="47" fill="#fff"/>
<path d="M52 47 Q56 36 66 30 Q76 24 72 12 Q80 20 74 32 Q66 38 66 47 Z" fill="#d9d4cc"/><path d="M60 47 Q64 34 78 28 L83 30 V47 Z" fill="#5a4a3a"/>
<rect x="4.8" y="8" width="46.4" height="39" fill="#a7977b"/>
<text x="9.8" y="15.8" font-family="Liberation Sans, sans-serif" font-weight="bold" font-size="6.2" fill="#fff" textLength="38.6" lengthAdjust="spacingAndGlyphs">ENGINEERING</text>
<text x="9.8" y="21.4" font-family="Liberation Sans, sans-serif" font-weight="bold" font-size="6.2" fill="#fff" textLength="26" lengthAdjust="spacingAndGlyphs">PROJECT</text>
<text x="9.8" y="27" font-family="Liberation Sans, sans-serif" font-weight="bold" font-size="6.2" fill="#fff" textLength="30.6" lengthAdjust="spacingAndGlyphs">PROPOSAL</text>
<rect x="10" y="32.6" width="20" height=".6" fill="#d8ccb4"/><rect x="10" y="34.6" width="16" height=".6" fill="#d8ccb4"/></svg><div class="bd">25</div></div>
</div>
<div id="canvas" class="a">
<div class="a" style="left:0;top:0;width:.9px;height:312px;background:#253647"></div>
<div class="a" style="left:1.5px;top:198px;width:6px;height:31px;border-radius:0 4px 4px 0;background:#253647"></div>
<svg class="a" style="left:-3.5px;top:209px" width="6" height="8" viewBox="0 0 6 8"><path d="M4.6 .8 L1.4 4 L4.6 7.2" fill="none" stroke="#d5dde5" stroke-width="1.3"/></svg>
<svg class="a" style="left:5px;top:293px" width="4" height="5" viewBox="0 0 4 5"><path d="M3.4 .4 L.6 2.5 L3.4 4.6 Z" fill="#51677c"/></svg>
<div class="a" style="left:170px;top:33px;font-size:7.3px;line-height:12px;color:#86a7c7;letter-spacing:-.12px">Page 1</div>
<div class="a" style="left:433.5px;top:29.5px;width:13.4px;height:13.4px;border-radius:7px;background:#fff"></div>
<div class="a" style="left:455px;top:28.5px;width:1px;height:15px;background:#2c3c4c"></div>
<svg class="a" style="left:466.5px;top:30.5px" width="10" height="11" viewBox="0 0 10 11"><rect x="3" y=".7" width="6" height="7.6" rx="1.2" fill="none" stroke="#bcc6d0" stroke-width="1.2"/><path d="M1 3 V8.6 Q1 10.2 2.6 10.2 H6.4" fill="none" stroke="#bcc6d0" stroke-width="1.2"/></svg>
<svg class="a" style="left:489px;top:30.5px" width="11" height="11" viewBox="0 0 11 11"><path d="M9 5 V3.4 L6.2 .7 H2.2 Q1 .7 1 2 V9 Q1 10.2 2.2 10.2 H5.6" fill="none" stroke="#bcc6d0" stroke-width="1.2"/><path d="M5.8 .9 V3.6 H8.8" fill="none" stroke="#bcc6d0" stroke-width="1"/><path d="M8.2 6.4 V10.4 M6.2 8.4 H10.2" stroke="#bcc6d0" stroke-width="1.2"/></svg>
<svg class="a" style="left:511.5px;top:30.5px" width="10" height="11" viewBox="0 0 10 11"><path d="M.6 2.6 H9.4 M3.4 2.4 V.8 H6.6 V2.4" fill="none" stroke="#bcc6d0" stroke-width="1.2"/><path d="M1.6 3 V9 Q1.6 10.3 2.9 10.3 H7.1 Q8.4 10.3 8.4 9 V3" fill="none" stroke="#bcc6d0" stroke-width="1.2"/><path d="M3.8 4.8 V8.2 M6.2 4.8 V8.2" stroke="#bcc6d0" stroke-width="1"/></svg>
<div class="a" style="left:169.9px;top:48.5px;width:353.5px;height:198.4px;background:#fff;overflow:hidden"></div>
<div class="a" style="left:169.9px;top:67.6px;width:149.2px;height:2.3px;background:#111"></div>
<div class="a" style="left:375px;top:226px;width:148.4px;height:2.2px;background:#111"></div>
<svg class="a" style="left:209.6px;top:76.5px" width="273.8" height="74" viewBox="8 13 784 211" preserveAspectRatio="none">
<defs><filter id="pb"><feGaussianBlur stdDeviation="1.7"/></filter><clipPath id="pc"><rect x="8" y="13" width="784" height="211"/></clipPath></defs>
<g clip-path="url(#pc)"><rect x="8" y="13" width="784" height="211" fill="#643620"/>
<g filter="url(#pb)">
<!-- left stairs -->
<rect x="0" y="0" width="110" height="230" fill="#dcd6cc"/>
<path d="M0 10 H84 L80 84 L0 60 Z" fill="#c8a274"/><path d="M0 120 L40 170 L30 230 L0 230 Z" fill="#d8b47c"/>
<path d="M8 20 L90 45 M8 85 L130 130 M8 150 L120 215" stroke="#f4f4f2" stroke-width="9"/>
<path d="M20 25 V90 M34 30 V95 M48 35 V100 M62 40 V105 M30 100 V160 M50 108 V170 M70 116 V180" stroke="#e8e6e0" stroke-width="3"/>
<!-- bookshelf mid-left -->
<rect x="245" y="13" width="130" height="215" fill="#6a3f22"/>
<rect x="250" y="22" width="120" height="20" fill="#2e2a2c"/><rect x="250" y="42" width="120" height="7" fill="#a8682e"/>
<rect x="250" y="52" width="120" height="24" fill="#3a3030"/><rect x="250" y="76" width="120" height="7" fill="#a8682e"/>
<rect x="250" y="86" width="120" height="24" fill="#4a2c22"/><rect x="250" y="110" width="120" height="7" fill="#9a5c2a"/>
<rect x="330" y="120" width="45" height="100" fill="#3a2a22"/>
<!-- center dark panel -->
<rect x="375" y="13" width="68" height="215" fill="#1d2a30"/>
<rect x="380" y="20" width="55" height="55" fill="#24404a"/><circle cx="405" cy="40" r="10" fill="#b04a4a"/><circle cx="420" cy="58" r="7" fill="#3a8aa0"/>
<rect x="386" y="88" width="46" height="54" fill="#2a7a6a"/><rect x="392" y="94" width="34" height="42" fill="#6a7a5a"/>
<rect x="385" y="150" width="40" height="40" fill="#7a2a2a"/>
<!-- right shelves -->
<rect x="443" y="13" width="350" height="215" fill="#6e4226"/>
<rect x="450" y="16" width="180" height="30" fill="#3a3438"/><rect x="555" y="14" width="40" height="26" fill="#d8682e"/><rect x="598" y="14" width="35" height="26" fill="#2a6ab0"/><rect x="515" y="16" width="35" height="22" fill="#5a4a48"/>
<rect x="445" y="46" width="190" height="8" fill="#b4703a"/>
<rect x="450" y="58" width="180" height="36" fill="#4a3a36"/><rect x="540" y="60" width="50" height="30" fill="#c84a4a"/><rect x="455" y="62" width="40" height="24" fill="#c8c0b8"/><rect x="595" y="60" width="30" height="30" fill="#8a6a4a"/>
<rect x="445" y="96" width="190" height="7" fill="#b4703a"/>
<rect x="575" y="105" width="50" height="50" fill="#5a3a2a"/>
<rect x="640" y="18" width="150" height="24" fill="#4a3c3a"/><rect x="650" y="18" width="25" height="20" fill="#3a7ac0"/><rect x="690" y="18" width="30" height="20" fill="#d8d0c8"/><rect x="740" y="18" width="30" height="20" fill="#9a4a3a"/>
<rect x="636" y="42" width="150" height="6" fill="#b87a42"/>
<rect x="640" y="50" width="130" height="32" fill="#5a4238"/><rect x="645" y="55" width="25" height="24" fill="#2a8a9a"/><rect x="675" y="52" width="25" height="26" fill="#e8e0d8"/><rect x="705" y="55" width="25" height="24" fill="#d84a6a"/><rect x="735" y="55" width="30" height="24" fill="#4a9a4a"/>
<rect x="636" y="84" width="140" height="6" fill="#b87a42"/>
<rect x="630" y="92" width="130" height="30" fill="#6a4a3a"/><rect x="635" y="96" width="30" height="22" fill="#c83a3a"/><rect x="670" y="98" width="30" height="20" fill="#3aa06a"/><rect x="705" y="96" width="25" height="22" fill="#3a5ac0"/><rect x="735" y="98" width="20" height="20" fill="#e0c040"/>
<rect x="625" y="124" width="140" height="6" fill="#b87a42"/>
<rect x="615" y="134" width="140" height="36" fill="#6a5040"/><rect x="620" y="146" width="30" height="22" fill="#7aa8a0"/><rect x="655" y="150" width="40" height="18" fill="#d8a0b0"/><rect x="705" y="132" width="30" height="14" fill="#c8c0b0"/><rect x="705" y="150" width="35" height="20" fill="#a86a8a"/>
<rect x="600" y="172" width="75" height="56" fill="#b48e66"/><rect x="612" y="178" width="48" height="24" fill="#eee8e2"/>
<rect x="680" y="176" width="70" height="50" fill="#5a4640"/><rect x="690" y="200" width="25" height="16" fill="#3a8ab0"/><rect x="720" y="198" width="25" height="18" fill="#c84a3a"/>
<path d="M760 120 L795 90 V230 H745 Z" fill="#2a2024"/><rect x="760" y="120" width="32" height="50" fill="#ded8d6"/><rect x="745" y="140" width="12" height="80" fill="#4a3a3a"/>
<!-- woman 2 -->
<path d="M470 100 Q470 66 520 70 Q572 76 572 130 Q580 180 560 215 L500 215 Q520 180 500 170 Q470 150 470 100 Z" fill="#2a1a16"/>
<path d="M400 224 Q400 160 440 142 L480 150 Q500 180 540 186 Q580 186 582 224 Z" fill="#e9b92b"/>
<ellipse cx="497" cy="135" rx="30" ry="37" fill="#d9a283"/>
<path d="M470 100 Q500 80 540 100 Q560 130 548 180 Q536 150 528 120 Q500 100 470 110 Z" fill="#2e1c16"/>
<path d="M480 162 Q498 178 520 160 L516 172 Q498 186 484 172 Z" fill="#c8886c"/><path d="M481 152 Q494 160 508 150 L506 156 Q494 164 483 157 Z" fill="#f4ece6"/><ellipse cx="487" cy="124" rx="5" ry="3" fill="#3a2620"/><ellipse cx="512" cy="116" rx="5" ry="3" fill="#3a2620"/>
<!-- woman 1 -->
<path d="M70 160 Q100 150 123 160 L123 214 L78 214 Z" fill="#e2b424"/>
<path d="M91 13 H182 L166 36 Q140 44 120 38 Z" fill="#4a2c1c"/>
<path d="M150 13 H216 L210 36 Q180 44 158 36 Z" fill="#d59c78"/>
<path d="M241 60 Q262 100 270 112 L262 122 Q244 104 234 90 Z" fill="#cf9270"/>
<path d="M102 30 Q110 16 130 15 Q170 48 215 15 L246 15 Q250 50 241 80 Q246 110 252 139 Q246 170 236 187 L121 190 L121 129 L86 116 Q76 96 80 70 Q86 46 102 30 Z" fill="#f5c52f"/>
<path d="M121 188 L257 181 L252 226 H121 Z" fill="#27364e"/>
<path d="M99 128 L129 128 Q140 150 161 161 L268 158 L322 172 L295 190 L257 183 L126 180 Q106 160 99 128 Z" fill="#dba27c"/>
<!-- paper -->
<path d="M263 112 L352 105 L355 215 L252 222 Z" fill="#2a9c92"/>
<path d="M264 114 L347 108 L349 211 L254 218 Z" fill="#f3f4f4"/>
<path d="M262 159 L300 162 L324 171 L300 180 L282 190 L262 184 Z" fill="#dba27c"/>
<rect x="8" y="200" width="70" height="30" fill="#d8cfc2"/>
<rect x="355" y="172" width="45" height="20" fill="#d8d4cc"/>
</g></g></svg>
<div class="a" style="left:170.5px;top:159.1px;width:353.8px;text-align:center;font-weight:bold;font-size:17.3px;line-height:17.25px;color:#161616;letter-spacing:.75px">Важливість бібліотек<br>у часи воєнного<br>конфлікту</div>
<div class="a" style="left:-243px;top:309.5px;width:800px;height:3px;background:#2c4255"></div>
<svg class="a" style="left:326px;top:301px" width="52" height="11" viewBox="0 0 52 11"><path d="M0 9 Q5 9 8 5 Q10.5 .8 15 .8 H37 Q41.5 .8 44 5 Q47 9 52 9 V11 H0 Z" fill="#2c4255"/><path d="M22.6 5.6 L26 8.8 L29.4 5.6" fill="none" stroke="#d5dde5" stroke-width="1.3"/></svg>
<svg class="a" style="left:443.5px;top:303px" width="8" height="12" viewBox="0 0 8 12"><path d="M.6 .6 V9.6 L2.8 7.6 L4.4 11.2 L5.8 10.6 L4.3 7.1 H7.2 Z" fill="#fff" stroke="#111" stroke-width=".7"/></svg>
</div>
</body></html>
